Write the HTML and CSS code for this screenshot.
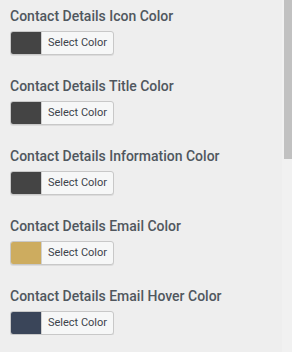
FILE: index.html
```html
<!DOCTYPE html>
<html lang="en">
<head>
    <meta charset="UTF-8">
    <meta name="viewport" content="width=device-width, initial-scale=1.0">
    <title>Contact Details Colors</title>
    <link rel="stylesheet" href="styles.css">
</head>
<body>
    <div class="settings">
        <div class="setting">
            <h3 class="setting-title">Contact Details Icon Color</h3>
            <button class="color-result"><span class="swatch swatch-dark"></span><span class="color-label">Select Color</span></button>
        </div>
        <div class="setting">
            <h3 class="setting-title">Contact Details Title Color</h3>
            <button class="color-result"><span class="swatch swatch-dark"></span><span class="color-label">Select Color</span></button>
        </div>
        <div class="setting">
            <h3 class="setting-title">Contact Details Information Color</h3>
            <button class="color-result"><span class="swatch swatch-dark"></span><span class="color-label">Select Color</span></button>
        </div>
        <div class="setting">
            <h3 class="setting-title">Contact Details Email Color</h3>
            <button class="color-result"><span class="swatch swatch-gold"></span><span class="color-label">Select Color</span></button>
        </div>
        <div class="setting">
            <h3 class="setting-title">Contact Details Email Hover Color</h3>
            <button class="color-result"><span class="swatch swatch-navy"></span><span class="color-label">Select Color</span></button>
        </div>
    </div>

    <!-- Panel scrollbar (drawn, the headless browser hides native ones) -->
    <div class="scrollbar"><div class="scrollbar-thumb"></div></div>
</body>
</html>
```

FILE: styles.css
```css
html {
    background-color: #eeeeee;
}

body {
    font-family: Roboto, "Noto Sans", Arial, sans-serif;
    color: #50575e;
    margin: 0;
    padding: 6px 10px 0;
}

.settings {
    display: flex;
    flex-direction: column;
    gap: 21px;
}

.setting {
    display: flex;
    flex-direction: column;
    align-items: flex-start;
    gap: 5px;
}

.setting-title {
    margin: 0;
    font-size: 14px;
    line-height: 20px;
    font-weight: 500;
}

.color-result {
    display: flex;
    align-items: stretch;
    height: 24px;
    width: 104px;
    padding: 0;
    border: 1px solid #c8c8c8;
    border-radius: 3px;
    background-color: #f6f7f7;
    overflow: hidden;
    cursor: pointer;
    box-shadow: 0 1px 0 #dcdcdc;
}

.swatch {
    width: 30px;
    flex: none;
    border-right: 1px solid #d0d0d0;
}

.swatch-dark { background-color: #444444; }
.swatch-gold { background-color: #cdac5f; }
.swatch-navy { background-color: #3a4559; }

.color-label {
    flex: 1;
    font-family: Roboto, "Noto Sans", Arial, sans-serif;
    font-size: 11px;
    line-height: 22px;
    color: #3c434a;
    text-align: center;
}

/* Scrollbar */
.scrollbar {
    position: fixed;
    top: 0;
    right: 0;
    bottom: 0;
    width: 10px;
    background-color: #f1f1f1;
}

.scrollbar-thumb {
    margin-left: 2px;
    height: 159px;
    background-color: #c1c1c1;
}
```
